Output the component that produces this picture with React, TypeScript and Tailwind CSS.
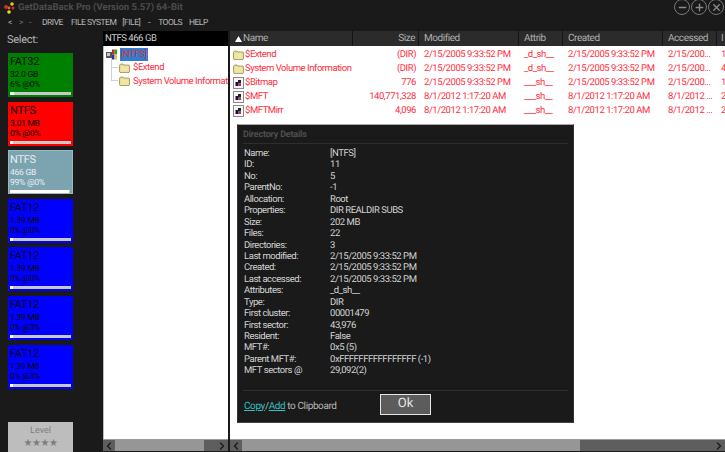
import React from 'react';
import { ChevronLeft, ChevronRight, Minus, Plus, X } from 'lucide-react';

const font = "font-['Roboto',sans-serif] [text-rendering:geometricPrecision]";

interface DriveCardProps {
  name: string;
  size: string;
  usage: string;
  fill: number;
  color: string;
  active?: boolean;
}

const drives: DriveCardProps[] = [
  { name: 'FAT32', size: '32.0 GB', usage: '6% @0%', fill: 6, color: 'bg-[#008000]' },
  { name: 'NTFS', size: '3.01 MB', usage: '0% @0%', fill: 1, color: 'bg-[#ff0000]' },
  { name: 'NTFS', size: '466 GB', usage: '99% @0%', fill: 99, color: 'bg-[#7ba3b0]', active: true },
  { name: 'FAT12', size: '1.39 MB', usage: '0% @0%', fill: 1, color: 'bg-[#0000ff]' },
  { name: 'FAT12', size: '1.39 MB', usage: '0% @0%', fill: 1, color: 'bg-[#0000ff]' },
  { name: 'FAT12', size: '1.39 MB', usage: '0% @3%', fill: 1, color: 'bg-[#0000ff]' },
  { name: 'FAT12', size: '1.39 MB', usage: '0% @3%', fill: 1, color: 'bg-[#0000ff]' },
];

const files = [
  { icon: 'folder', name: '$Extend', size: '(DIR)', mod: '2/15/2005 9:33:52 PM', attr: '_d_sh__', created: '2/15/2005 9:33:52 PM', acc: '2/15/200...', id: '1' },
  { icon: 'folder', name: 'System Volume Information', size: '(DIR)', mod: '2/15/2005 9:33:52 PM', attr: '_d_sh__', created: '2/15/2005 9:33:52 PM', acc: '2/15/200...', id: '4' },
  { icon: 'file', name: '$Bitmap', size: '776', mod: '2/15/2005 9:33:52 PM', attr: '___sh__', created: '2/15/2005 9:33:52 PM', acc: '2/15/200...', id: '1' },
  { icon: 'file', name: '$MFT', size: '140,771,328', mod: '8/1/2012 1:17:20 AM', attr: '___sh__', created: '8/1/2012 1:17:20 AM', acc: '8/1/2012 ...', id: '2' },
  { icon: 'file', name: '$MFTMirr', size: '4,096', mod: '8/1/2012 1:17:20 AM', attr: '___sh__', created: '8/1/2012 1:17:20 AM', acc: '8/1/2012 ...', id: '2' },
];

const details: [string, string][] = [
  ['Name:', '[NTFS]'],
  ['ID:', '11'],
  ['No:', '5'],
  ['ParentNo:', '-1'],
  ['Allocation:', 'Root'],
  ['Properties:', 'DIR REALDIR SUBS'],
  ['Size:', '202 MB'],
  ['Files:', '22'],
  ['Directories:', '3'],
  ['Last modified:', '2/15/2005 9:33:52 PM'],
  ['Created:', '2/15/2005 9:33:52 PM'],
  ['Last accessed:', '2/15/2005 9:33:52 PM'],
  ['Attributes:', '_d_sh__'],
  ['Type:', 'DIR'],
  ['First cluster:', '00001479'],
  ['First sector:', '43,976'],
  ['Resident:', 'False'],
  ['MFT#:', '0x5 (5)'],
  ['Parent MFT#:', '0xFFFFFFFFFFFFFFFF (-1)'],
  ['MFT sectors @', '29,092(2)'],
];

const FolderIcon = () => (
  <svg width="11" height="10" viewBox="0 0 11 10" className="flex-shrink-0">
    <path d="M0.5 2.5 L1.5 1 H4 L5 2 H10 L10.5 2.5 V9 L10 9.5 H1 L0.5 9 Z" fill="#e9d98c" stroke="#8a8450" strokeWidth="0.7" />
    <rect x="1.5" y="3.2" width="8" height="5.4" fill="#f1e6a6" />
  </svg>
);

const FileIcon = () => (
  <svg width="11" height="12" viewBox="0 0 11 12" className="flex-shrink-0">
    <rect x="0.5" y="0.5" width="10" height="11" fill="#f6f6f6" stroke="#8a8a8a" />
    <rect x="2.5" y="5" width="3" height="4" fill="#14143c" />
    <rect x="5" y="3" width="3" height="3.5" fill="#222" />
    <rect x="5.5" y="6.5" width="2.5" height="2.5" fill="#b03060" />
  </svg>
);

const DriveIcon = () => (
  <svg width="12" height="11" viewBox="0 0 12 11" className="flex-shrink-0">
    <rect x="0" y="3" width="6" height="6" fill="#555" />
    <rect x="1" y="4" width="3" height="3" fill="#c9c9c9" />
    <rect x="6" y="0.5" width="2.5" height="5" fill="#d62020" />
    <rect x="8.5" y="0.5" width="2.5" height="5" fill="#20a030" />
    <rect x="6" y="5.5" width="2.5" height="5" fill="#2030d0" />
    <rect x="8.5" y="5.5" width="2.5" height="5" fill="#e8c820" />
  </svg>
);

const Logo = () => (
  <svg width="11" height="12" viewBox="0 0 11 12">
    <circle cx="2" cy="5" r="2" fill="#d43020" />
    <circle cx="8" cy="2" r="1.8" fill="#e8c820" />
    <circle cx="5" cy="6" r="1.4" fill="#e07020" />
    <circle cx="9" cy="6" r="1.5" fill="#d43020" />
    <circle cx="5" cy="10" r="1.8" fill="#f0d820" />
  </svg>
);

const DriveCard = ({ name, size, usage, fill, color, active }: DriveCardProps) => (
  <div className={`${color} ${active ? 'text-[#e8eef0] border border-[#9bb7c0] pl-[1px]' : 'text-[#0a0a0a] pl-[2px]'} w-[65px] h-[44px] pr-[2px] flex flex-col`}>
    <div className="text-[11px] leading-[14px] mt-[2px] tracking-[-0.3px]">{name}</div>
    <div className="text-[8.5px] leading-[10px] mt-[1px] tracking-[-0.25px]">{size}</div>
    <div className="text-[8.5px] leading-[10px] tracking-[-0.25px]">{usage}</div>
    <div className="h-[3px] mt-[2px] bg-[#c8c8c8]">
      <div className="h-full bg-white" style={{ width: `${Math.max(fill, 5)}%` }} />
    </div>
  </div>
);

const ScrollBar = ({ thumbWidth }: { thumbWidth: string }) => (
  <div className="h-[13px] flex-shrink-0 pb-[1px] bg-[#1a1a1a]">
    <div className="h-full bg-[#5e5e5e] border-t border-[#9a9a9a] flex items-center">
      <ChevronLeft size={12} strokeWidth={3} className="text-[#1e1e1e] flex-shrink-0" />
      <div className={`h-full bg-[#969696] ${thumbWidth}`} />
      <ChevronRight size={12} strokeWidth={3} className="text-[#1e1e1e] ml-auto flex-shrink-0" />
    </div>
  </div>
);

const HeaderCell = ({ children, className = '' }: { children: React.ReactNode; className?: string }) => (
  <div className={`h-full flex items-center border-r border-[#151515] flex-shrink-0 ${className}`}>{children}</div>
);

const WinButton = ({ children }: { children: React.ReactNode }) => (
  <div className="w-[16px] h-[16px] rounded-full border-[1.5px] border-[#777] flex items-center justify-center text-[#8a8a8a]">
    {children}
  </div>
);

export default function App() {
  return (
    <div className={`${font} w-[725px] h-[452px] bg-[#1a1a1a] overflow-hidden flex flex-col relative`}>
      {/* title and menu */}
      <div className="h-[31px] flex-shrink-0 relative">
        <div className="flex items-center gap-[2px] pl-[4px] h-[15px]">
          <Logo />
          <span className="text-[9.5px] leading-[12px] font-bold text-[#4c4c4c] ml-[1px]">GetDataBack Pro (Version 5.57) 64-Bit</span>
        </div>
        <div className="flex items-center h-[16px] text-[8.5px] leading-[12px] tracking-[-0.5px] text-[#b8b8b8] pl-[8px]">
          <span className="w-[11px]">&lt;</span>
          <span className="w-[10px] text-[#777]">&gt;</span>
          <span className="w-[13px] text-[#777]">-</span>
          <span>DRIVE</span>
          <span className="ml-[8px]">FILE SYSTEM</span>
          <span className="ml-[6px]">[FILE]</span>
          <span className="ml-[8px]">-</span>
          <span className="ml-[8px]">TOOLS</span>
          <span className="ml-[7px]">HELP</span>
        </div>
        <div className="absolute right-[1px] top-[-1px] flex gap-[1px]">
          <WinButton><Minus size={11} strokeWidth={3} /></WinButton>
          <WinButton><Plus size={11} strokeWidth={3} /></WinButton>
          <WinButton><X size={11} strokeWidth={3} /></WinButton>
        </div>
      </div>

      <div className="flex flex-1 min-h-0">
        {/* drive list */}
        <div className="w-[103px] flex-shrink-0 flex flex-col">
          <div className="text-[11px] leading-[14px] tracking-[-0.3px] text-[#b4b4b4] pl-[7px] pt-[2px] h-[22px]">Select:</div>
          <div className="flex flex-col gap-[4.6px] pl-[8px]">
            {drives.map((d, i) => (
              <DriveCard key={i} {...d} />
            ))}
          </div>
          <div className="mt-auto ml-[8px] w-[65px] h-[30px] bg-[#bdbdbd] flex flex-col items-center text-[#7d7d7d]">
            <div className="text-[9px] leading-[12px] mt-[3px]">Level</div>
            <div className="text-[10px] leading-[12px] tracking-[-0.5px] mt-[1px]">★★★★</div>
          </div>
        </div>

        {/* tree */}
        <div className="w-[125px] flex-shrink-0 flex flex-col">
          <div className="h-[15px] bg-black text-[9.5px] leading-[15px] tracking-[-0.45px] text-[#d0d0d0] pl-[2px] flex-shrink-0">NTFS 466 GB</div>
          <div className="flex-1 bg-white border-l border-[#bbb] relative overflow-hidden pt-[1px] text-[9.5px] leading-[13px] tracking-[-0.45px] text-[#ff2d3d] whitespace-nowrap">
            <div className="flex items-center h-[14px] pl-[2px]">
              <DriveIcon />
              <span className="ml-[2px] bg-[#2f7fd0] text-[#d8303c] px-[1px]">[NTFS]</span>
            </div>
            <div className="flex items-center h-[13.5px] pl-[15px]">
              <FolderIcon />
              <span className="ml-[3px]">$Extend</span>
            </div>
            <div className="flex items-center h-[13.5px] pl-[15px]">
              <FolderIcon />
              <span className="ml-[3px]">System Volume Information</span>
            </div>
            <div className="absolute left-[7px] top-[12px] w-[7px] h-[23px] border-l border-b border-[#d0d0d0]" />
            <div className="absolute left-[7px] top-[21px] w-[7px] border-b border-[#d0d0d0]" />
          </div>
          <ScrollBar thumbWidth="w-[89px]" />
        </div>

        {/* separator between tree and list */}
        <div className="w-[2px] flex-shrink-0 bg-[#1a1a1a]" />

        {/* file list */}
        <div className="flex-1 min-w-0 flex flex-col">
          <div className="h-[15px] flex-shrink-0 bg-[#2b2b2b] flex items-center text-[10px] leading-[13px] tracking-[-0.45px] text-[#b0b0b0] whitespace-nowrap overflow-hidden">
            <HeaderCell className="w-[123px] pl-[5px]">
              <svg width="7" height="6" viewBox="0 0 7 6" className="mr-[1px]"><path d="M3.5 0 L7 6 H0 Z" fill="#fff" /></svg>
              Name
            </HeaderCell>
            <HeaderCell className="w-[66px] justify-end pr-[3px]">Size</HeaderCell>
            <HeaderCell className="w-[100px] pl-[5px]">Modified</HeaderCell>
            <HeaderCell className="w-[44px] pl-[5px]">Attrib</HeaderCell>
            <HeaderCell className="w-[100px] pl-[5px]">Created</HeaderCell>
            <HeaderCell className="w-[54px] pl-[5px]">Accessed</HeaderCell>
            <div className="pl-[4px] w-[8px] overflow-hidden">I</div>
          </div>
          <div className="flex-1 bg-white pt-[2px] text-[9.5px] leading-[14px] tracking-[-0.45px] text-[#ff2d3d] whitespace-nowrap overflow-hidden">
            {files.map((f) => (
              <div key={f.name} className="flex items-center h-[14px]">
                <div className="w-[123px] pl-[3px] flex items-center flex-shrink-0">
                  {f.icon === 'folder' ? <FolderIcon /> : <FileIcon />}
                  <span className="ml-[1px]">{f.name}</span>
                </div>
                <div className="w-[66px] text-right pr-[3px] flex-shrink-0">{f.size}</div>
                <div className="w-[100px] pl-[5px] flex-shrink-0">{f.mod}</div>
                <div className="w-[44px] pl-[5px] flex-shrink-0">{f.attr}</div>
                <div className="w-[100px] pl-[5px] flex-shrink-0">{f.created}</div>
                <div className="w-[54px] pl-[5px] flex-shrink-0">{f.acc}</div>
                <div className="pl-[4px]">{f.id}</div>
              </div>
            ))}
          </div>
          <ScrollBar thumbWidth="w-[338px]" />
        </div>
      </div>

      {/* directory details dialog */}
      <div className="absolute left-[237px] top-[124px] w-[337px] h-[299px] bg-[#1a1a1a] border border-t-[#aaa] border-x-[#333] border-b-[#444] flex flex-col">
        <div className="text-[9px] font-bold text-[#4e4e4e] pl-[5px] pt-[4px] leading-[12px] tracking-[-0.2px] h-[18px]">Directory Details</div>
        <div className="mx-[5px] border-t border-[#2e2e2e]" />
        <div className="pl-[6px] pt-[4px] text-[9.5px] leading-[11.45px] tracking-[-0.45px] text-[#d4d4d4]">
          {details.map(([label, value]) => (
            <div key={label} className="flex h-[11.45px] whitespace-nowrap">
              <div className="w-[86px] flex-shrink-0">{label}</div>
              <div>{value}</div>
            </div>
          ))}
        </div>
        <div className="mx-[5px] mt-[13px] border-t border-[#2e2e2e]" />
        <div className="flex items-start relative flex-1 pl-[6px]">
          <div className="text-[10px] tracking-[-0.4px] text-[#b8b8b8] mt-[9px] leading-[13px]">
            <span className="text-[#2fc0c0] underline">Copy</span>/<span className="text-[#2fc0c0] underline">Add</span> to Clipboard
          </div>
          <div className="absolute left-[142px] top-[3px] w-[51px] h-[21px] bg-[#5c5c5c] border border-[#e6e6e6] flex items-center justify-center text-[13px] leading-[16px] text-[#e6e6e6]">Ok</div>
        </div>
      </div>
    </div>
  );
}
